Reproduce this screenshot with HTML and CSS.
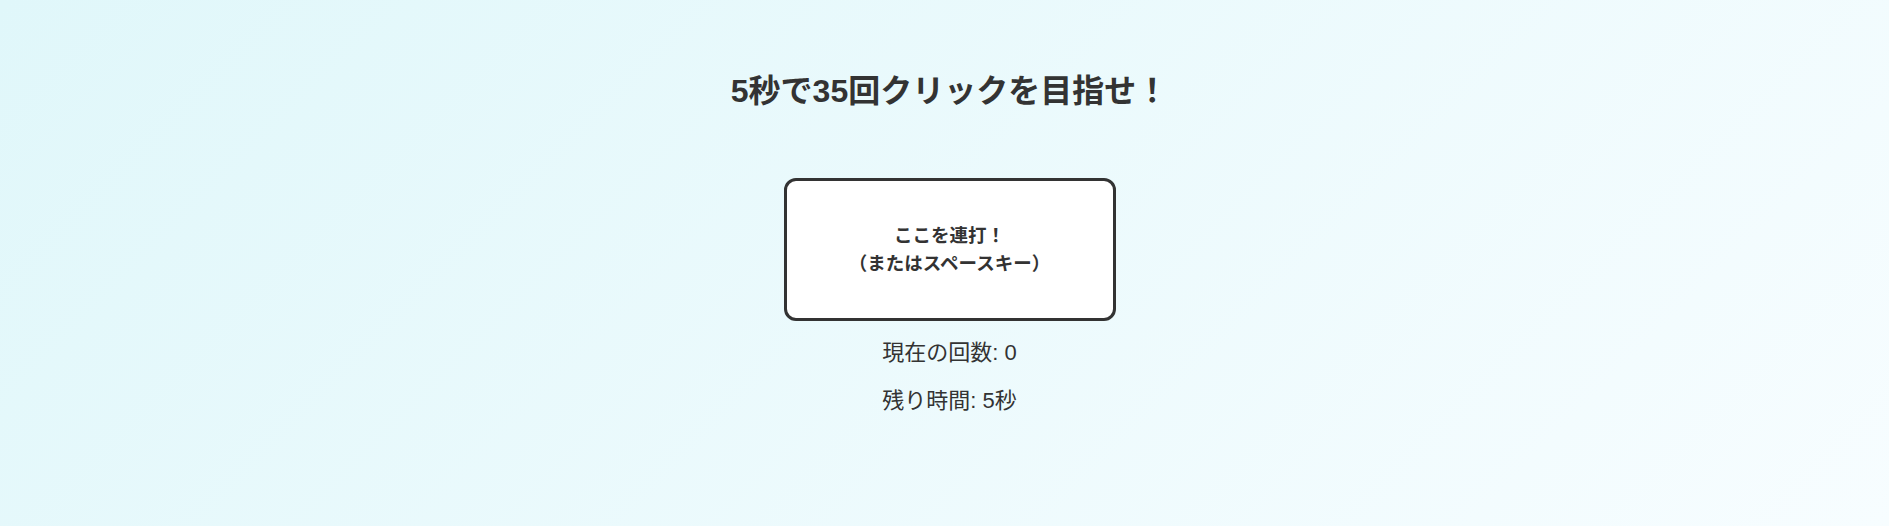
FILE: index.html
```html
<!DOCTYPE html>
<html lang="ja">
<head>
    <meta charset="UTF-8">
    <title>連打ゲーム</title>
    <link rel="stylesheet" href="styles.css">
</head>
<body>
    <div class="game">
        <h1>5秒で35回クリックを目指せ！</h1>
        <button class="tap-button" id="tap">ここを連打！<br>（またはスペースキー）</button>
        <p class="status">現在の回数: <span id="count">0</span></p>
        <p class="status">残り時間: <span id="time">5</span>秒</p>
    </div>

    <script>
        let count = 0;
        let timeLeft = 5;
        let timer = null;

        function tap() {
            if (timeLeft <= 0) return;
            if (!timer) startTimer();
            count++;
            document.getElementById('count').textContent = count;
        }

        function startTimer() {
            timer = setInterval(function () {
                timeLeft--;
                document.getElementById('time').textContent = timeLeft;
                if (timeLeft <= 0) clearInterval(timer);
            }, 1000);
        }

        document.getElementById('tap').addEventListener('click', tap);
        document.addEventListener('keydown', function (e) {
            if (e.code === 'Space') {
                e.preventDefault();
                tap();
            }
        });
    </script>
</body>
</html>
```

FILE: styles.css
```css
html, body {
    height: 100%;
}

body {
    margin: 0;
    font-family: "Liberation Sans", "Noto Sans CJK JP", sans-serif;
    color: #333;
    background: linear-gradient(135deg, #e0f7fa, #f7fdff);
}

.game {
    display: flex;
    flex-direction: column;
    align-items: center;
    padding: 68px 0 0 10px;
}

h1 {
    margin: 0 0 64px;
    font-size: 32px;
    line-height: 46px;
    font-weight: bold;
}

.tap-button {
    width: 332px;
    height: 143px;
    box-sizing: border-box;
    background: #fff;
    border: 3px solid #333;
    border-radius: 12px;
    font-family: inherit;
    font-size: 18.5px;
    line-height: 28px;
    font-weight: bold;
    color: #333;
    cursor: pointer;
}

.status {
    margin: 17px 0 0;
    font-size: 22px;
    line-height: 30px;
}

.status + .status {
    margin-top: 18px;
}
```
